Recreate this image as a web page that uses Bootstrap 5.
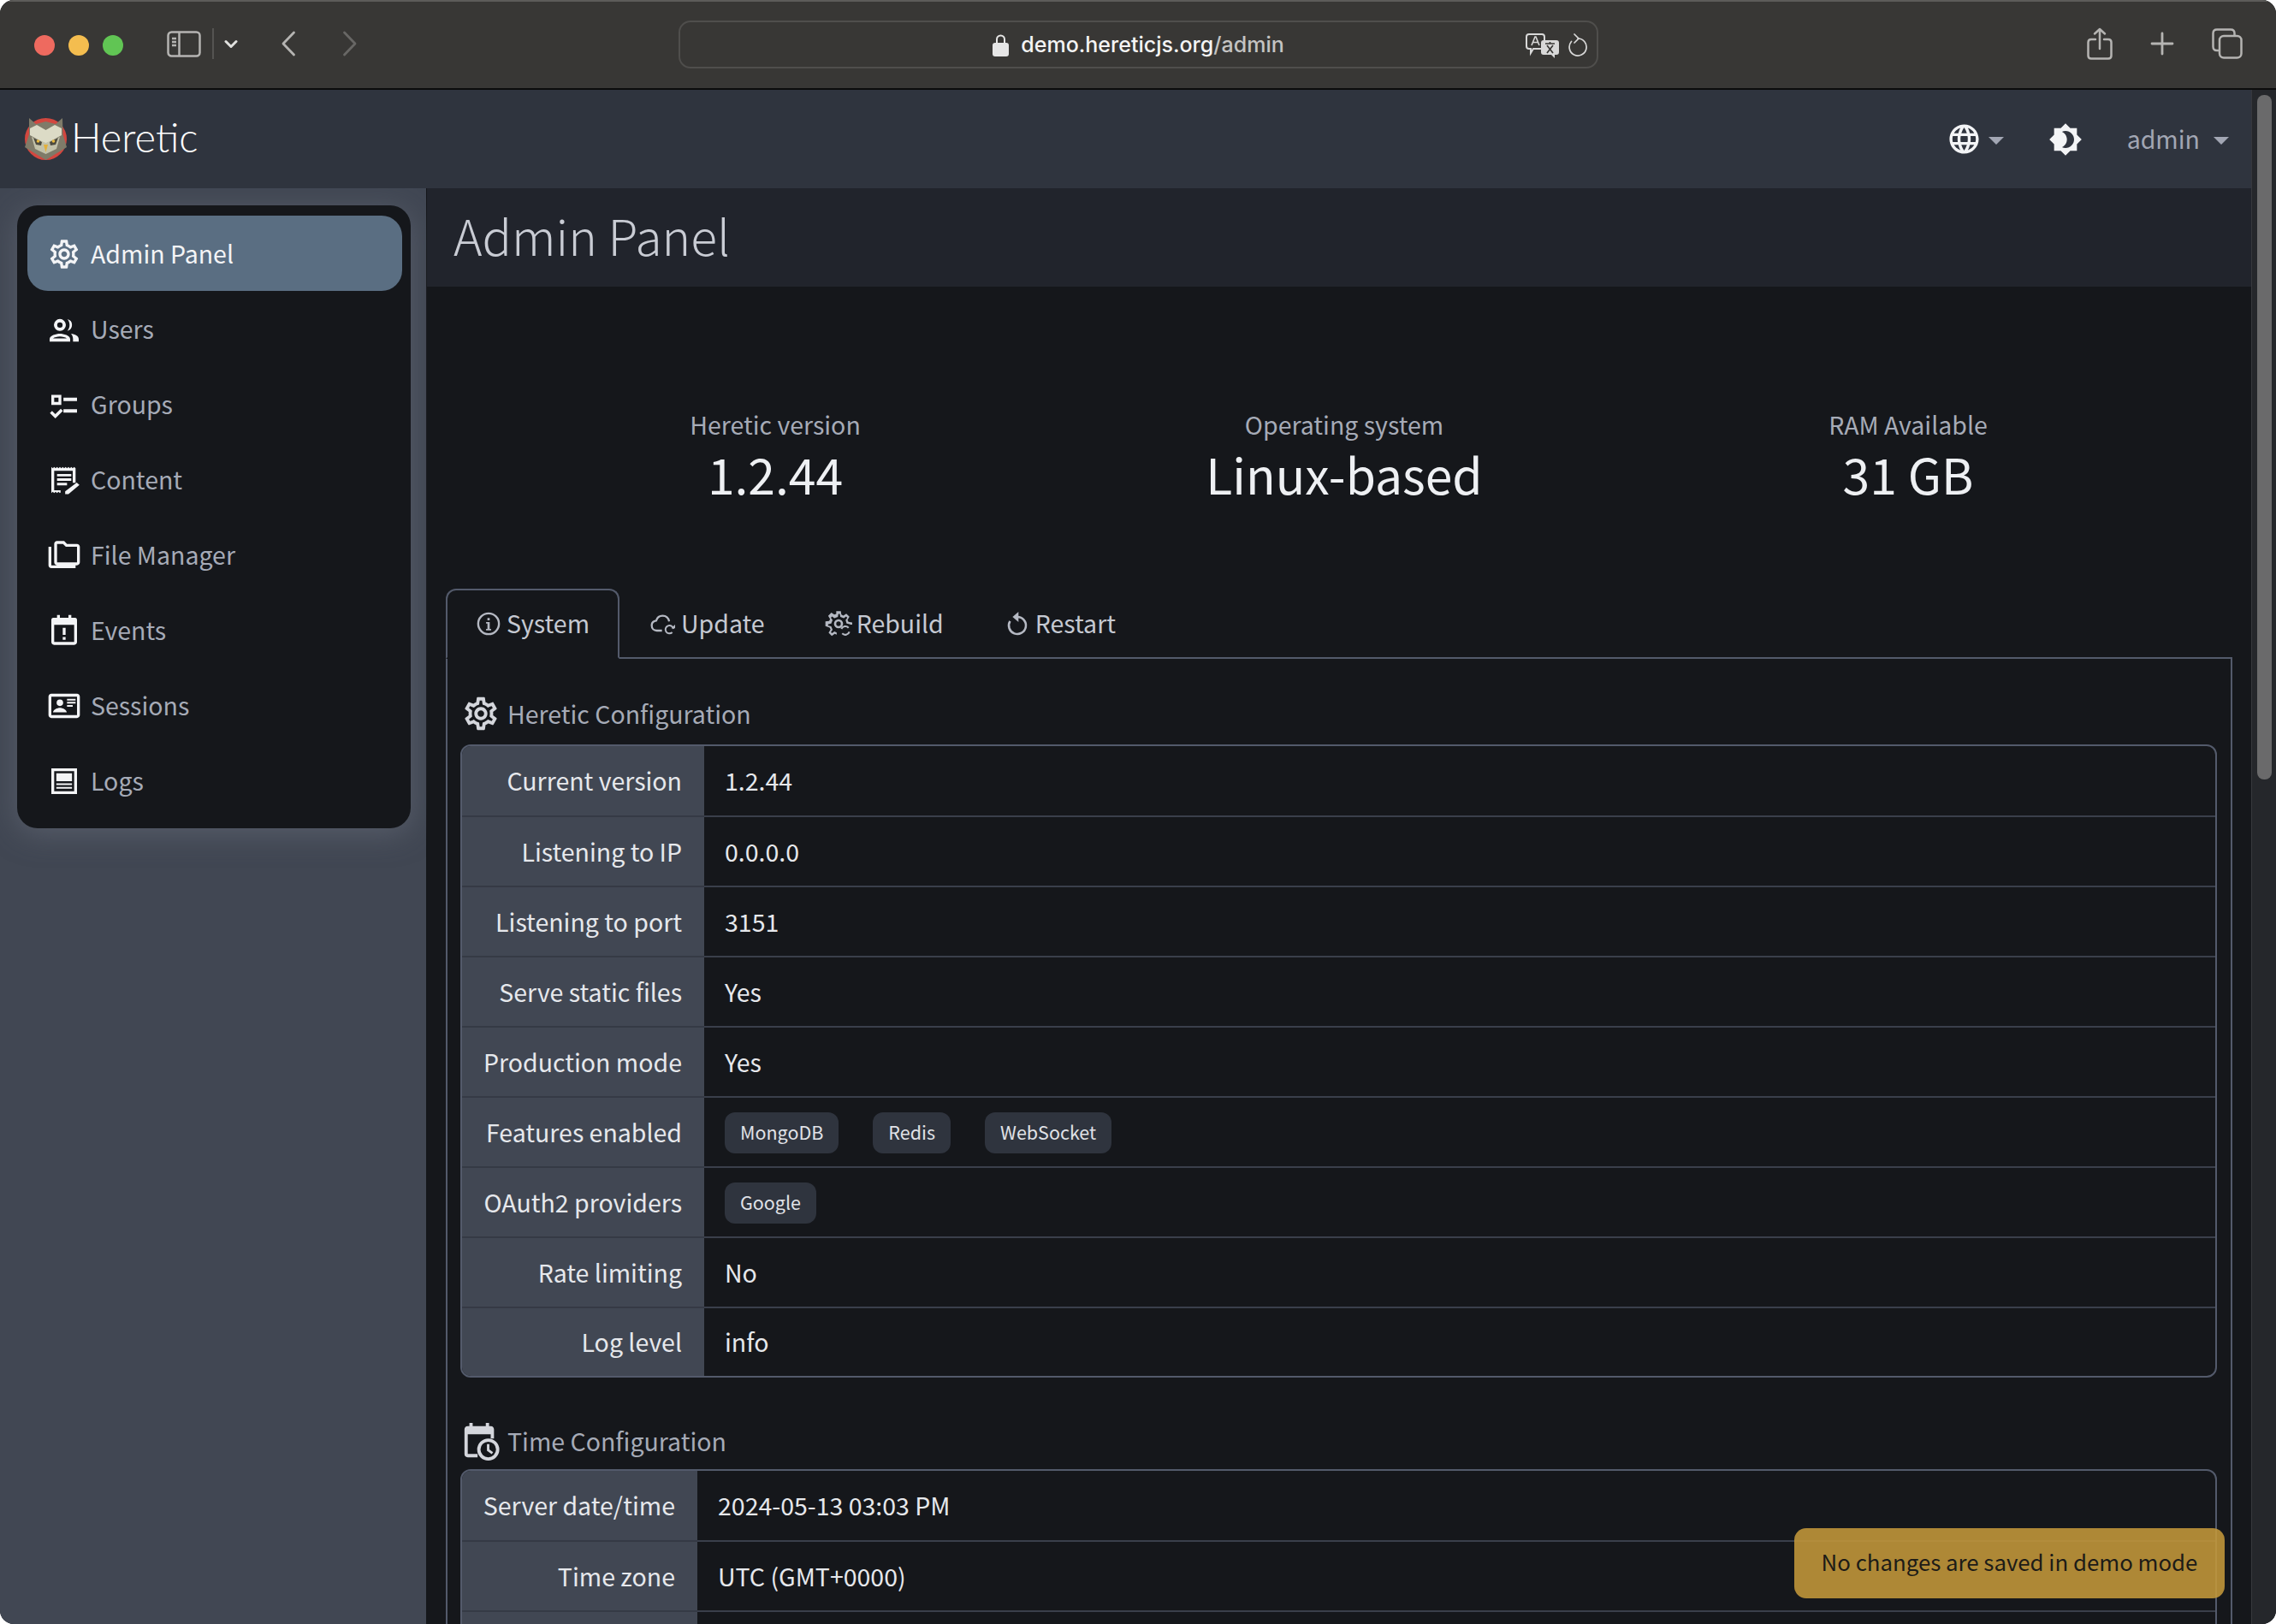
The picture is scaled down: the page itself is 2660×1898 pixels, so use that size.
<!DOCTYPE html>
<html lang="en">
<head>
    <meta charset="UTF-8">
    <meta name="viewport" content="width=device-width, initial-scale=1.0">
    <title>Heretic - Admin Panel</title>
    <link href="https://cdn.jsdelivr.net/npm/bootstrap@5.3.0/dist/css/bootstrap.min.css" rel="stylesheet">
    <style>
        html, body { height: 100%; background: #fff; overflow: hidden; }
        body { font-family: "Noto Sans CJK SC", "Noto Sans", sans-serif; font-size: 28.5px; color: #e6e8ec; }
        .app-window { height: 1898px; border-radius: 16px; overflow: hidden; position: relative; background: #15171b; }

        /* browser chrome */
        .chrome-bar { height: 105px; flex: none; background: #383735; border-top: 2px solid #5d5c5a; border-bottom: 2px solid #0c0c0c; padding: 0 39px 3px 40px; }
        .dot { width: 24px; height: 24px; border-radius: 50%; margin-right: 16px; margin-top: 3px; }
        .dot-red { background: #ee6a5f; }
        .dot-yellow { background: #f4bd4f; }
        .dot-green { background: #61c554; }
        .chrome-icon { color: #b5b4b2; display: block; flex: none; }
        .chrome-sep { width: 2px; height: 36px; background: #555452; margin-left: 13px; }
        .panel-btn { margin-left: 35px; }
        .chevron-btn { margin-left: 12px; }
        .back-btn { margin-left: 50px; }
        .fwd-btn { margin-left: 54px; color: #686765; }
        .plus-btn, .tabs-btn { margin-left: 44px; }
        .address-bar { position: absolute; left: 793px; top: 22px; width: 1075px; height: 56px; border: 2px solid #4f4e4c; border-radius: 14px; }
        .address-text { font-family: Inter, "Liberation Sans", sans-serif; font-size: 25px; font-weight: 500; color: #f4f4f4; margin: 2px 0 0 14px; }
        .address-text span { color: #c4c4c3; }
        .address-right { position: absolute; right: 11px; top: 11px; }

        /* app navbar */
        .top-nav { height: 115px; background: #2f343e; padding: 0; flex: none; }
        .brand-link { margin-left: 29px !important; }
        .brand-name { font-family: Lato, sans-serif; font-weight: 300; font-size: 47px; line-height: 1; color: #fff; margin-left: 4px; margin-top: -4px; }
        .nav-tools { margin-right: 26px; }
        .nav-caret { width: 0; height: 0; border-left: 9px solid transparent; border-right: 9px solid transparent; border-top: 9px solid #a2a6b3; margin-left: 8px; margin-top: 4px; }
        .admin-name { color: #a2a6b3; font-size: 28.5px; line-height: 1; margin-left: 52px; }
        .admin-caret { margin-left: 16px; }
        .theme-btn { margin-left: 52px; }

        /* sidebar */
        .side-col { width: 499px; flex: none; background: #414753; border-right: 1px solid #15171b; padding: 20px 18px 0 20px; }
        .side-panel { background: #15171b; border-radius: 24px; padding: 12px 10px 12px 12px; height: 728px; box-shadow: 0 6px 34px rgba(110, 116, 130, .5); }
        .side-link { height: 88px; border-radius: 24px; padding: 0 0 0 23px; color: #a6abb7; font-size: 28.5px; }
        .side-link:hover { color: #a6abb7; }
        .side-link.active, .side-link.active:hover { background: #5a6e82; color: #f3f4f6; }
        .side-ico { width: 40px; height: 40px; margin: 2px 11px 0 0; color: #f3f4f6; flex: none; }

        /* main */
        .main-col { flex: 1; min-width: 0; background: #15171b; }
        .page-head { height: 115px; background: #21242c; padding-left: 31px; }
        .page-title { font-size: 57px; font-weight: 300; color: #c9ccd4; margin: 0; line-height: 108px; }
        .main-body { padding: 0 22px; }
        .stats-grid { display: grid; grid-template-columns: 770px 560px 1fr; padding-top: 137px; height: 353px; text-align: center; }
        .stat-label { color: #a6abb7; font-size: 28.5px; line-height: 48px; }
        .stat-value { font-size: 57px; line-height: 66px; color: #eef0f3; }

        .tabs-row { border-bottom: 2px solid #535a6b; gap: 1px; height: 82px; }
        .tabs-row .nav-link { height: 82px; padding: 0 33px 1px 32px; border: 2px solid transparent; border-radius: 12px 12px 0 0; color: #c5c9d2; font-size: 28.5px; margin-bottom: 0; }
        .tabs-row .nav-link.active { background: #15171b; color: #c5c9d2; border-color: #535a6b #535a6b #15171b; }
        .tab-ico { width: 32px; height: 32px; margin-right: 5px; flex: none; color: #b5b9c3; }
        .tab-pane-box { border: 2px solid #535a6b; border-top: 0; padding: 0 16px 0 15px; height: 1200px; }

        .section-head { color: #a6abb7; font-size: 28.5px; height: 100px; padding: 28px 0 0 1px; }
        .section-head-next { margin-top: 7px; padding-top: 34px; }
        .section-ico { width: 46px; height: 46px; margin-right: 8px; color: #d4d6dc; flex: none; }
        .conf-wrap { border: 2px solid #535a6b; border-radius: 12px; overflow: hidden; }
        .conf-table { margin: 0; table-layout: fixed; --bs-table-bg: transparent; --bs-table-color: #e6e8ec; }
        .conf-table th, .conf-table td { height: 82px; vertical-align: middle; border-bottom: 2px solid #3a3f4b; font-weight: 400; font-size: 28.5px; color: #e6e8ec; }
        .conf-table td { padding: 0 24px; }
        .conf-table tr:last-child th, .conf-table tr:last-child td { border-bottom: 0; height: 80px; }
        .conf-table th { padding: 0 26px 0 10px; background: #414753; text-align: right; white-space: nowrap; border-bottom-color: #353a45; }
        .heretic-conf th { width: 283px; }
        .time-conf th { width: 275px; }
        .feat-pill { background: #2f343e; color: #e0e2e7; font-size: 21.5px; font-weight: 400; border-radius: 12px; padding: 0 18px; height: 48px; line-height: 46px; margin-right: 40px; display: inline-block; vertical-align: middle; }

        /* scrollbar strip and demo toast */
        .scroll-strip { width: 29px; flex: none; background: #25272b; border-left: 1px solid #36383d; padding: 6px 5px 0 6px; }
        .scroll-thumb { height: 800px; border-radius: 8px; background: #6a6a6b; }
        .demo-toast { position: absolute; left: 2097px; top: 1786px; width: 503px; height: 82px; padding-bottom: 3px; border: 0; border-radius: 14px; background: rgba(196, 152, 58, .88); color: #1c1b17; font-size: 25.8px; box-shadow: none; }
    </style>
</head>
<body>
    <svg width="0" height="0" class="position-absolute">
        <symbol id="i-gear" viewBox="0 0 24 24"><path fill="currentColor" d="M19.43 12.98c.04-.32.07-.64.07-.98 0-.34-.03-.66-.07-.98l2.11-1.65c.19-.15.24-.42.12-.64l-2-3.46c-.09-.16-.26-.25-.44-.25-.06 0-.12.01-.17.03l-2.49 1c-.52-.4-1.08-.73-1.69-.98l-.38-2.65C14.46 2.18 14.25 2 14 2h-4c-.25 0-.46.18-.49.42l-.38 2.65c-.61.25-1.17.59-1.69.98l-2.49-1c-.06-.02-.12-.03-.18-.03-.17 0-.34.09-.43.25l-2 3.46c-.13.22-.07.49.12.64l2.11 1.65c-.04.32-.07.65-.07.98 0 .33.03.66.07.98l-2.11 1.65c-.19.15-.24.42-.12.64l2 3.46c.09.16.26.25.44.25.06 0 .12-.01.17-.03l2.49-1c.52.4 1.08.73 1.69.98l.38 2.65c.03.24.24.42.49.42h4c.25 0 .46-.18.49-.42l.38-2.65c.61-.25 1.17-.59 1.69-.98l2.49 1c.06.02.12.03.18.03.17 0 .34-.09.43-.25l2-3.46c.12-.22.07-.49-.12-.64l-2.11-1.65zm-1.98-1.71c.04.31.05.52.05.73 0 .21-.02.43-.05.73l-.14 1.13.89.7 1.08.84-.7 1.21-1.27-.51-1.04-.42-.9.68c-.43.32-.84.56-1.25.73l-1.06.43-.16 1.13-.2 1.35h-1.4l-.19-1.35-.16-1.13-1.06-.43c-.43-.18-.83-.41-1.23-.71l-.91-.7-1.06.43-1.27.51-.7-1.21 1.08-.84.89-.7-.14-1.13c-.03-.31-.05-.54-.05-.74s.02-.43.05-.73l.14-1.13-.89-.7-1.08-.84.7-1.21 1.27.51 1.04.42.9-.68c.43-.32.84-.56 1.25-.73l1.06-.43.16-1.13.2-1.35h1.39l.19 1.35.16 1.13 1.06.43c.43.18.83.41 1.23.71l.91.7 1.06-.43 1.27-.51.7 1.21-1.07.85-.89.7.14 1.13zM12 8c-2.21 0-4 1.79-4 4s1.79 4 4 4 4-1.79 4-4-1.79-4-4-4zm0 6c-1.1 0-2-.9-2-2s.9-2 2-2 2 .9 2 2-.9 2-2 2z"/></symbol>
        <symbol id="i-users" viewBox="0 0 24 24"><path transform="translate(0,1)" fill="currentColor" fill-rule="evenodd" d="M9 3.700a4.200 4.200 0 1 1 0 8.400 4.200 4.200 0 0 1 0-8.400zm0 2.300a1.900 1.900 0 1 0 0 3.800 1.900 1.900 0 0 0 0-3.800zM14.200 3.800a4.200 4.200 0 0 1 0 8.200c1-1 1.600-2.400 1.600-4.100s-.6-3.100-1.600-4.100zM1.800 19.500v-1.800C1.800 15.300 6.300 14 9 14s7.200 1.300 7.200 3.700v1.800zm2.400-2.200h9.600c-.8-.7-3-1.300-4.800-1.300s-4 .6-4.800 1.300zM16.800 14c2.800.4 5.400 1.600 5.400 3.700v1.800h-4v-1.800c0-1.500-.6-2.700-1.400-3.700z"/></symbol>
        <symbol id="i-groups" viewBox="0 0 24 24"><path transform="translate(0,2.600)" fill="currentColor" fill-rule="evenodd" d="M3 2.500h7v7H3zm2 2v3h3v-3zM11.500 4.500H21v2.400h-9.500zM11.500 12.500H21v2.400h-9.500zM2 15.200l1.500-1.500 2.300 2.300 3.800-3.800 1.500 1.500-5.300 5.300z"/></symbol>
        <symbol id="i-content" viewBox="0 0 24 24"><path transform="translate(0,1.600) scale(1,.88)" fill="currentColor" d="M3 1.500l1 1 1-1 1 1 1-1 1 1 1-1 1 1 1-1 1 1 1-1 1 1 1-1 1 1 1-1 1 1 1-1 1 1v11.500h-2V4.500H5v15.500h4.500v1.700l-.5.500-1-1-1 1-1-1-1 1-1-1-1 1zM7 7h10v2H7zM7 10.500h10v2H7zM7 14h7v2H7zM20.800 13.800l1.900 1.900-7.700 7.300H12.700v-2.200z"/></symbol>
        <symbol id="i-files" viewBox="0 0 24 24"><path fill="currentColor" fill-rule="evenodd" d="M3 19h17v2H3c-1.100 0-2-.9-2-2V6h2zM23 6v11c0 1.100-.9 2-2 2H7c-1.100 0-2-.9-2-2V4c0-1.100.9-2 2-2h5l2 2h7c1.100 0 2 .9 2 2zM7 17h14V6h-7.830l-2-2H7z"/></symbol>
        <symbol id="i-events" viewBox="0 0 24 24"><path fill="currentColor" fill-rule="evenodd" d="M7 1h2v2h6V1h2v2h2.500C20.900 3 21 4 21 5v15c0 1-.6 2-2 2H5c-1.400 0-2-1-2-2V5c0-1 .1-2 1.500-2H7zM5 8v12h14V8zM11 10h2v5h-2zM11 16.500h2v2h-2z"/></symbol>
        <symbol id="i-sessions" viewBox="0 0 24 24"><path fill="currentColor" fill-rule="evenodd" d="M3 3.500h18c1.100 0 2 .9 2 2v13c0 1.100-.9 2-2 2H3c-1.100 0-2-.9-2-2v-13c0-1.100.9-2 2-2zm0 2v13h18v-13zM9 7.500a2.300 2.300 0 1 1 0 4.600 2.300 2.300 0 0 1 0-4.600zM4.200 16.500c0-1.900 3-3.200 4.800-3.200s4.800 1.300 4.800 3.200zM14 7h6v1.200h-6zM14 9.200h6v1.200h-6zM14 11.400h4v1.200h-4z"/></symbol>
        <symbol id="i-logs" viewBox="0 0 24 24"><path fill="currentColor" fill-rule="evenodd" d="M3 3h18v18H3zm2 2v14h14V5zM6.500 6.500h11v5.500h-11zM6.500 13.500h11v1.200h-11zM6.500 16h11v1.200h-11z"/></symbol>
        <symbol id="i-info" viewBox="0 0 24 24"><path fill="currentColor" fill-rule="evenodd" d="M12 2a10 10 0 1 1 0 20 10 10 0 0 1 0-20zm0 1.800a8.200 8.200 0 1 0 0 16.400 8.200 8.200 0 0 0 0-16.400zM11 7h2v2h-2zM9.800 10.500H13v6h1.200v1.300H9.800v-1.300H11v-4.700H9.800z"/></symbol>
        <symbol id="i-cloud" viewBox="0 0 24 24"><path fill="none" stroke="currentColor" stroke-width="1.700" d="M11 18H6.500C3.800 18 2 16 2 13.500S3.800 9.500 6 9.200C6.900 6.300 9 5 11.500 5c3 0 5.200 2 5.800 5"/><path fill="none" stroke="currentColor" stroke-width="1.500" d="M21 16.500a3.500 3.500 0 1 0-1 3"/><path fill="currentColor" d="M19 16h3.500v-3.200z"/></symbol>
        <symbol id="i-rebuild" viewBox="0 0 24 24"><path fill="currentColor" fill-rule="evenodd" d="M10 1h4l.5 3 1.700.8 2.600-1.700 2.800 2.800-1.700 2.700.8 1.700 3.300.5v2h-1.900l-.1-.5-2.900-.5-.9-3 1.500-2.100-1-1-2.100 1.500-3-1.200-.5-2.700h-1.200l-.5 2.700-3 1.200-2.100-1.500-1 1 1.500 2.100-1.200 3-2.700.5v1.400l2.700.5 1.200 3-1.500 2.100 1 1 2.100-1.500 2 .8v2l-1.700-.7-2.600 1.700-2.800-2.800 1.700-2.700-.8-1.700L.5 14v-4l3.300-.5.8-1.700L2.900 5.100l2.800-2.800 2.600 1.700L10 3.300zM12 8a4 4 0 1 1 0 8 4 4 0 0 1 0-8zm0 2a2 2 0 1 0 0 4 2 2 0 0 0 0-4z"/><path fill="none" stroke="currentColor" stroke-width="1.600" d="M14.500 16.500a3.800 3.800 0 0 1 6.300-1M21.500 19a3.800 3.800 0 0 1-6.300 1.500"/></symbol>
        <symbol id="i-restart" viewBox="0 0 24 24"><path fill="none" stroke="currentColor" stroke-width="1.900" d="M12 6a7.500 7.500 0 1 1-6.400 3.600"/><path fill="currentColor" d="M13 1.500v9L7.800 6z"/></symbol>
        <symbol id="i-timecfg" viewBox="0 0 24 24"><path fill="currentColor" fill-rule="evenodd" d="M5 1h2v2h8V1h2v2h1c1.400 0 2 1 2 2v5.500h-2V8H4v12h6v2H4c-1.400 0-2-1-2-2V5c0-1 .6-2 2-2h1z"/><path fill="currentColor" fill-rule="evenodd" d="M16.500 10.500a6.750 6.750 0 1 1 0 13.500 6.750 6.750 0 0 1 0-13.500zm0 2a4.750 4.750 0 1 0 0 9.500 4.750 4.750 0 0 0 0-9.500zM15.700 14h1.500v3.200l2.300 1.700-.9 1.200-2.900-2.100z"/></symbol>
    </svg>

    <div class="app-window d-flex flex-column">
        <!-- Safari toolbar -->
        <div class="chrome-bar d-flex align-items-center position-relative">
            <span class="dot dot-red"></span>
            <span class="dot dot-yellow"></span>
            <span class="dot dot-green"></span>
            <svg class="chrome-icon panel-btn" width="40" height="31" viewBox="0 0 40 31" fill="none" stroke="currentColor" stroke-width="2.500"><rect x="1.500" y="1.500" width="37" height="28" rx="4"/><path d="M14.500 2v27M6 9h5M6 13h5M6 17h5"/></svg>
            <span class="chrome-sep"></span>
            <svg class="chrome-icon chevron-btn" width="16" height="11" viewBox="0 0 16 11" fill="none" stroke="#e0e0de" stroke-width="3" stroke-linecap="round" stroke-linejoin="round"><path d="M2 2.500l6 6 6-6"/></svg>
            <svg class="chrome-icon back-btn" width="18" height="30" viewBox="0 0 18 30" fill="none" stroke="currentColor" stroke-width="2.800" stroke-linecap="round" stroke-linejoin="round"><path d="M15.500 2L3 15l12.500 13"/></svg>
            <svg class="chrome-icon fwd-btn" width="18" height="30" viewBox="0 0 18 30" fill="none" stroke="currentColor" stroke-width="2.800" stroke-linecap="round" stroke-linejoin="round"><path d="M2.500 2L15 15 2.500 28"/></svg>

            <div class="address-bar d-flex align-items-center justify-content-center">
                <svg width="19" height="27" viewBox="0 0 19 27" fill="#e6e6e6"><path d="M4 12V7a5.500 5.500 0 0 1 11 0v5h-2V7a3.500 3.500 0 0 0-7 0v5z"/><rect y="11" width="19" height="16" rx="3"/></svg>
                <div class="address-text">demo.hereticjs.org<span>/admin</span></div>
                <div class="address-right d-flex align-items-center gap-2">
                    <svg width="41" height="30" viewBox="0 0 41 30" fill="none"><path d="M5 2h15c2 0 3 1 3 3v11c0 2-1 3-3 3H10l-3 5v-5H5c-2 0-3-1-3-3V5c0-2 1-3 3-3z" stroke="#d8d8d8" stroke-width="2"/><path d="M8 15l4-10h1l4 10M9.500 11.500h6" stroke="#d8d8d8" stroke-width="1.600"/><path d="M22 9h15c2 0 3 1 3 3v11c0 2-1 3-3 3h-2v4l-4-4h-9c-2 0-3-1-3-3V12c0-2 1-3 3-3z" fill="#d8d8d8"/><path d="M24 13h11M29.500 11v2M26 24l7-9M33 24l-7-9" stroke="#383735" stroke-width="1.700"/></svg>
                    <svg width="24" height="32" viewBox="0 0 24 32" fill="none" stroke="#d8d8d8" stroke-width="1.700" stroke-linecap="round"><path d="M13 8a10 10 0 1 1-7.500 3.500"/><path d="M9 3l5 5-5 5"/></svg>
                </div>
            </div>

            <div class="ms-auto d-flex align-items-center">
                <svg class="chrome-icon" width="30" height="38" viewBox="0 0 30 38" fill="none" stroke="currentColor" stroke-width="2.500" stroke-linecap="round" stroke-linejoin="round"><path d="M10 14H5c-2 0-3.500 1-3.500 3.500V33c0 2.500 1.500 3.500 3.500 3.500h20c2 0 3.500-1 3.500-3.500V17.500C28.500 15 27 14 25 14h-5M15 25V2M9 7.500L15 2l6 5.500"/></svg>
                <svg class="chrome-icon plus-btn" width="28" height="28" viewBox="0 0 28 28" fill="none" stroke="currentColor" stroke-width="2.800" stroke-linecap="round"><path d="M14 2v24M2 14h24"/></svg>
                <svg class="chrome-icon tabs-btn" width="36" height="36" viewBox="0 0 36 36" fill="none" stroke="currentColor" stroke-width="2.500"><path d="M8 26H6c-3 0-4.500-1.500-4.500-4.500V6C1.500 3 3 1.500 6 1.500h16c3 0 4.500 1.500 4.500 4.500v2"/><rect x="9" y="9" width="25.500" height="25.500" rx="5"/></svg>
            </div>
        </div>

        <div class="d-flex flex-grow-1" style="min-height:0">
            <div class="flex-grow-1 d-flex flex-column" style="min-width:0">
                <!-- app navbar -->
                <nav class="navbar top-nav">
                    <a class="navbar-brand brand-link d-flex align-items-center p-0" href="#">
                        <svg width="50" height="51" viewBox="0 0 50 51">
                            <circle cx="24.500" cy="25.500" r="24.500" fill="#d2473f"/>
                            <polygon points="5,1 13,8 24.500,5 36,8 44,1 44.500,20 49,35 24.500,50 0,35 5,20" fill="#7f7b69"/>
                            <polygon points="6,13 14,9 24.500,15 35,9 43,13 43,21 24.500,31 6,21" fill="#dcdbc6"/>
                            <polygon points="8,23 24.500,30 41,23 37,37 24.500,43 12,37" fill="#c3c2aa"/>
                            <polygon points="10,24 20,29 19,33 13,32" fill="#4d4b3f"/>
                            <polygon points="39,24 29,29 30,33 36,32" fill="#4d4b3f"/>
                            <circle cx="15.500" cy="28" r="1.800" fill="#e8b93e"/>
                            <circle cx="33.500" cy="28" r="1.800" fill="#e8b93e"/>
                            <polygon points="22,32 27,32 24.500,41" fill="#e3b03a"/>
                        </svg>
                        <span class="brand-name">Heretic</span>
                    </a>
                    <div class="nav-tools d-flex align-items-center">
                        <svg width="41" height="41" viewBox="0 0 24 24" fill="#f3f4f6"><path d="M11.990 2C6.470 2 2 6.480 2 12s4.470 10 9.990 10C17.520 22 22 17.520 22 12S17.520 2 11.990 2zm6.930 6h-2.950c-.32-1.250-.78-2.450-1.380-3.560 1.840.63 3.370 1.910 4.330 3.560zM12 4.040c.83 1.200 1.480 2.530 1.910 3.960h-3.820c.43-1.430 1.080-2.760 1.910-3.960zM4.260 14C4.100 13.360 4 12.690 4 12s.1-1.360.26-2h3.380c-.08.66-.14 1.320-.14 2 0 .68.06 1.340.14 2H4.260zm.82 2h2.950c.32 1.250.78 2.450 1.380 3.560-1.840-.63-3.370-1.900-4.330-3.560zm2.950-8H5.080c.96-1.660 2.490-2.930 4.330-3.560C8.810 5.550 8.350 6.750 8.030 8zM12 19.960c-.83-1.200-1.480-2.530-1.910-3.960h3.820c-.43 1.430-1.080 2.760-1.910 3.960zM14.340 14H9.660c-.09-.66-.16-1.320-.16-2 0-.68.07-1.350.16-2h4.680c.09.65.16 1.320.16 2 0 .68-.07 1.340-.16 2zm.25 5.560c.6-1.110 1.060-2.310 1.380-3.560h2.950c-.96 1.650-2.490 2.930-4.330 3.560zM16.360 14c.08-.66.14-1.320.14-2 0-.68-.06-1.340-.14-2h3.380c.16.64.26 1.310.26 2s-.1 1.360-.26 2h-3.380z"/></svg>
                        <span class="nav-caret"></span>
                        <svg class="theme-btn" width="40" height="40" viewBox="0 0 24 24" fill="#f3f4f6"><path d="M20 8.690V4h-4.690L12 .69 8.690 4H4v4.690L.69 12 4 15.310V20h4.690L12 23.310 15.310 20H20v-4.690L23.310 12 20 8.690zM12 18c-.89 0-1.740-.2-2.500-.55C11.560 16.500 13 14.420 13 12s-1.440-4.500-3.500-5.450C10.260 6.200 11.110 6 12 6c3.310 0 6 2.690 6 6s-2.690 6-6 6z"/></svg>
                        <span class="admin-name">admin</span>
                        <span class="nav-caret admin-caret"></span>
                    </div>
                </nav>

                <div class="d-flex flex-grow-1" style="min-height:0">
                    <!-- sidebar -->
                    <div class="side-col">
                        <div class="side-panel">
                            <nav class="nav flex-column">
                                <a class="nav-link side-link active d-flex align-items-center" href="#"><svg class="side-ico"><use href="#i-gear"/></svg>Admin Panel</a>
                                <a class="nav-link side-link d-flex align-items-center" href="#"><svg class="side-ico"><use href="#i-users"/></svg>Users</a>
                                <a class="nav-link side-link d-flex align-items-center" href="#"><svg class="side-ico"><use href="#i-groups"/></svg>Groups</a>
                                <a class="nav-link side-link d-flex align-items-center" href="#"><svg class="side-ico"><use href="#i-content"/></svg>Content</a>
                                <a class="nav-link side-link d-flex align-items-center" href="#"><svg class="side-ico"><use href="#i-files"/></svg>File Manager</a>
                                <a class="nav-link side-link d-flex align-items-center" href="#"><svg class="side-ico"><use href="#i-events"/></svg>Events</a>
                                <a class="nav-link side-link d-flex align-items-center" href="#"><svg class="side-ico"><use href="#i-sessions"/></svg>Sessions</a>
                                <a class="nav-link side-link d-flex align-items-center" href="#"><svg class="side-ico"><use href="#i-logs"/></svg>Logs</a>
                            </nav>
                        </div>
                    </div>

                    <!-- main content -->
                    <div class="main-col">
                        <div class="page-head"><h1 class="page-title">Admin Panel</h1></div>
                        <div class="main-body">
                            <div class="stats-grid">
                                <div><div class="stat-label">Heretic version</div><div class="stat-value">1.2.44</div></div>
                                <div><div class="stat-label">Operating system</div><div class="stat-value">Linux-based</div></div>
                                <div><div class="stat-label">RAM Available</div><div class="stat-value">31 GB</div></div>
                            </div>

                            <ul class="nav nav-tabs tabs-row">
                                <li class="nav-item"><a class="nav-link active d-flex align-items-center" href="#"><svg class="tab-ico"><use href="#i-info"/></svg>System</a></li>
                                <li class="nav-item"><a class="nav-link d-flex align-items-center" href="#"><svg class="tab-ico"><use href="#i-cloud"/></svg>Update</a></li>
                                <li class="nav-item"><a class="nav-link d-flex align-items-center" href="#"><svg class="tab-ico"><use href="#i-rebuild"/></svg>Rebuild</a></li>
                                <li class="nav-item"><a class="nav-link d-flex align-items-center" href="#"><svg class="tab-ico"><use href="#i-restart"/></svg>Restart</a></li>
                            </ul>
                            <div class="tab-pane-box">
                                <div class="section-head d-flex align-items-center"><svg class="section-ico"><use href="#i-gear"/></svg>Heretic Configuration</div>
                                <div class="conf-wrap">
                                    <table class="table conf-table heretic-conf">
                                        <tbody>
                                            <tr><th>Current version</th><td>1.2.44</td></tr>
                                            <tr><th>Listening to IP</th><td>0.0.0.0</td></tr>
                                            <tr><th>Listening to port</th><td>3151</td></tr>
                                            <tr><th>Serve static files</th><td>Yes</td></tr>
                                            <tr><th>Production mode</th><td>Yes</td></tr>
                                            <tr><th>Features enabled</th><td><span class="badge feat-pill">MongoDB</span><span class="badge feat-pill">Redis</span><span class="badge feat-pill">WebSocket</span></td></tr>
                                            <tr><th>OAuth2 providers</th><td><span class="badge feat-pill">Google</span></td></tr>
                                            <tr><th>Rate limiting</th><td>No</td></tr>
                                            <tr><th>Log level</th><td>info</td></tr>
                                        </tbody>
                                    </table>
                                </div>
                                <div class="section-head section-head-next d-flex align-items-center"><svg class="section-ico"><use href="#i-timecfg"/></svg>Time Configuration</div>
                                <div class="conf-wrap">
                                    <table class="table conf-table time-conf">
                                        <tbody>
                                            <tr><th>Server date/time</th><td>2024-05-13 03:03 PM</td></tr>
                                            <tr><th>Time zone</th><td>UTC (GMT+0000)</td></tr>
                                            <tr><th></th><td></td></tr>
                                        </tbody>
                                    </table>
                                </div>
                            </div>
                        </div>
                    </div>
                </div>
            </div>
            <div class="scroll-strip"><div class="scroll-thumb"></div></div>
        </div>

        <div class="toast show demo-toast d-flex align-items-center justify-content-center">No changes are saved in demo mode</div>
    </div>

    <script src="https://cdn.jsdelivr.net/npm/bootstrap@5.3.0/dist/js/bootstrap.bundle.min.js"></script>
</body>
</html>
